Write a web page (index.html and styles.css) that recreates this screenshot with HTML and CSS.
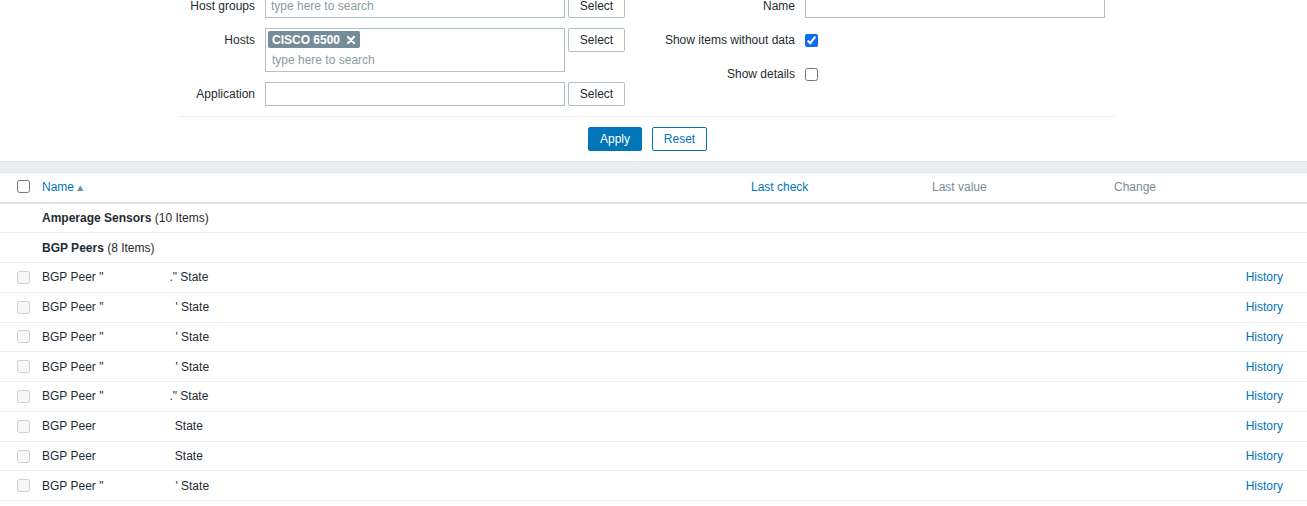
FILE: index.html
```html
<!DOCTYPE html>
<html>
<head>
<meta charset="utf-8">
<link rel="stylesheet" href="styles.css">
</head>
<body>
<div class="filter">
  <div class="cols">
    <div class="col col-left">
      <div class="frow">
        <label class="lbl">Host groups</label>
        <div class="inp ph">type here to search</div>
        <button class="btn-sel">Select</button>
      </div>
      <div class="frow">
        <label class="lbl">Hosts</label>
        <div class="inp multi">
          <span class="tag">CISCO 6500<svg class="x" viewBox="0 0 8 8" width="8" height="8"><path d="M1 1L7 7M7 1L1 7" stroke="#fff" stroke-width="2.2" stroke-linecap="round"/></svg></span>
          <span class="ph-line">type here to search</span>
        </div>
        <button class="btn-sel">Select</button>
      </div>
      <div class="frow">
        <label class="lbl">Application</label>
        <div class="inp"></div>
        <button class="btn-sel">Select</button>
      </div>
    </div>
    <div class="col col-right">
      <div class="frow">
        <label class="lbl lbl-r">Name</label>
        <div class="inp"></div>
      </div>
      <div class="frow">
        <label class="lbl lbl-r">Show items without data</label>
        <span class="chk-wrap"><input type="checkbox" class="chk" checked></span>
      </div>
      <div class="frow">
        <label class="lbl lbl-r">Show details</label>
        <span class="chk-wrap"><input type="checkbox" class="chk"></span>
      </div>
    </div>
  </div>
  <div class="sep"></div>
  <div class="actions">
    <button class="btn-apply">Apply</button>
    <button class="btn-reset">Reset</button>
  </div>
</div>
<div class="band"></div>
<table class="list">
  <colgroup>
    <col class="c-chk"><col class="c-name"><col class="c-check"><col class="c-value"><col class="c-change">
  </colgroup>
  <thead>
    <tr>
      <th><input type="checkbox" class="chk"></th>
      <th class="link">Name <span class="arrow">&#9650;</span></th>
      <th class="link">Last check</th>
      <th class="muted">Last value</th>
      <th class="muted">Change</th>
    </tr>
  </thead>
  <tbody>
    <tr><td></td><td colspan="4"><b>Amperage Sensors</b> (10 Items)</td></tr>
    <tr><td></td><td colspan="4"><b>BGP Peers</b> (8 Items)</td></tr>
    <tr><td><input type="checkbox" class="chk" disabled></td><td>BGP Peer "<span class="gap g1"></span>." State</td><td></td><td></td><td class="hist">History</td></tr>
    <tr><td><input type="checkbox" class="chk" disabled></td><td>BGP Peer "<span class="gap g2"></span>' State</td><td></td><td></td><td class="hist">History</td></tr>
    <tr><td><input type="checkbox" class="chk" disabled></td><td>BGP Peer "<span class="gap g3"></span>' State</td><td></td><td></td><td class="hist">History</td></tr>
    <tr><td><input type="checkbox" class="chk" disabled></td><td>BGP Peer "<span class="gap g3"></span>' State</td><td></td><td></td><td class="hist">History</td></tr>
    <tr><td><input type="checkbox" class="chk" disabled></td><td>BGP Peer "<span class="gap g1"></span>." State</td><td></td><td></td><td class="hist">History</td></tr>
    <tr><td><input type="checkbox" class="chk" disabled></td><td>BGP Peer<span class="gap g4"></span>State</td><td></td><td></td><td class="hist">History</td></tr>
    <tr><td><input type="checkbox" class="chk" disabled></td><td>BGP Peer<span class="gap g4"></span>State</td><td></td><td></td><td class="hist">History</td></tr>
    <tr><td><input type="checkbox" class="chk" disabled></td><td>BGP Peer "<span class="gap g3"></span>' State</td><td></td><td></td><td class="hist">History</td></tr>
  </tbody>
</table>
</body>
</html>
```

FILE: styles.css
```css
* { box-sizing: border-box; }
html, body { margin: 0; padding: 0; background: #fff; }
body {
  font-family: "Liberation Sans", Arial, sans-serif;
  font-size: 12px;
  color: #1f2c33;
  overflow: hidden;
}
button { font-family: inherit; font-size: 12px; cursor: pointer; }

.filter {
  width: 935px;
  margin-left: 180px;
  margin-top: -6px;
  padding-bottom: 10px;
}
.cols { display: flex; }
.col { display: flex; flex-direction: column; gap: 10px; }
.col-left { width: 465px; }
.col-right { width: 470px; }
.frow { display: flex; align-items: flex-start; gap: 10px; }
.lbl {
  width: 75px;
  text-align: right;
  line-height: 24px;
  white-space: nowrap;
  flex: none;
}
.lbl-r { width: 150px; }
.inp {
  width: 300px;
  height: 24px;
  border: 1px solid #b1bfc6;
  background: #fff;
  padding: 0 5px;
  line-height: 22px;
  flex: none;
}
.ph { color: #8c9ba3; }
.multi {
  height: 44px;
  padding: 2px 2px;
  line-height: 16px;
}
.tag {
  display: inline-flex;
  align-items: center;
  height: 17px;
  background: #768d99;
  color: #fff;
  font-weight: bold;
  padding: 0 5px 0 4px;
  border-radius: 2px;
  gap: 7px;
}
.x { display: block; }
.ph-line { display: block; color: #8c9ba3; padding-left: 4px; margin-top: 4px; line-height: 16px; }
.frow .btn-sel { margin-left: -7px; }
.btn-sel {
  width: 57px;
  height: 24px;
  border: 1px solid #b1bfc6;
  border-radius: 2px;
  background: #fff;
  color: #1f2c33;
  padding: 0;
}
.chk-wrap { height: 24px; display: flex; align-items: center; }
.chk { width: 13px; height: 13px; margin: 0; display: block; }
.chk:checked { accent-color: #0b6bf2; }

.sep { margin-top: 10px; border-top: 1px solid #ebeef0; }
.actions { display: flex; justify-content: center; gap: 10px; padding-top: 10px; }
.btn-apply {
  width: 54px; height: 24px;
  background: #0275b8; color: #fff;
  border: 1px solid #0275b8; border-radius: 2px;
  padding: 0;
}
.btn-reset {
  width: 55px; height: 24px;
  background: #fff; color: #0275b8;
  border: 1px solid #0275b8; border-radius: 2px;
  padding: 0;
}

.band {
  height: 12px;
  background: #ebeef0;
  border-top: 1px solid #dfe4e7;
  border-bottom: 1px solid #dfe4e7;
}

.list { width: 100%; border-collapse: collapse; table-layout: fixed; }
.c-chk { width: 42px; }
.c-name { width: 709px; }
.c-check { width: 181px; }
.c-value { width: 182px; }
.list th {
  height: 30px;
  text-align: left;
  font-weight: normal;
  border-bottom: 2px solid #dfe4e7;
  padding: 0 0 2px 0;
  white-space: nowrap;
}
.list th:first-child, .list td:first-child { padding-left: 17px; }
.link { color: #0275b8; }
.muted { color: #768d99; }
.arrow { color: #768d99; font-size: 10px; vertical-align: 0; margin-left: -2px; }
.list td {
  height: 29.78px;
  padding: 0;
  border-bottom: 1px solid #ebeef0;
  white-space: nowrap;
}
.list b { font-weight: bold; }
.gap { display: inline-block; }
.g1 { width: 66px; }
.g2 { width: 72px; }
.g3 { width: 72px; }
.g4 { width: 79px; }
.hist { text-align: right; padding-right: 24px !important; color: #0275b8; }
```
